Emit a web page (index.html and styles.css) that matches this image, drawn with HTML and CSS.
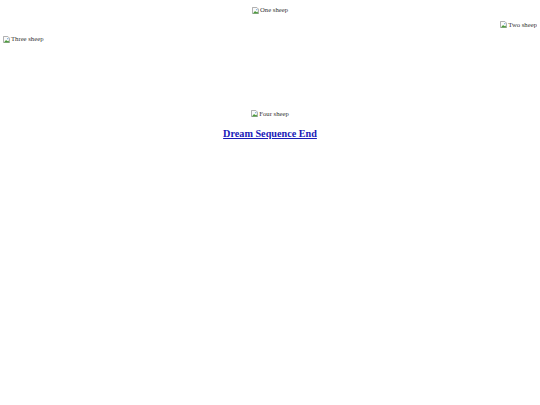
FILE: index.html
```html
<!DOCTYPE html>
<html lang="en">
<head>
    <meta charset="UTF-8">
    <title>Counting Sheep</title>
    <link rel="stylesheet" href="styles.css">
</head>
<body>
    <!-- Ovelhas: cada uma em sua linha -->
    <div class="flock">
        <div class="sheep sheep-center">
            <span class="pic"><svg viewBox="0 0 8 8" width="7" height="7"><path d="M0.5 0.5h5l2 2v5h-7z" fill="#fafafa" stroke="#a0a0a0"/><path d="M1 7.5l2.5-3 1.5 1.5 1-1 1.5 2.5z" fill="#4a9a3a"/><circle cx="5.5" cy="3" r="0.8" fill="#6aa2d8"/></svg></span>One sheep
        </div>
        <div class="sheep sheep-right">
            <span class="pic"><svg viewBox="0 0 8 8" width="7" height="7"><path d="M0.5 0.5h5l2 2v5h-7z" fill="#fafafa" stroke="#a0a0a0"/><path d="M1 7.5l2.5-3 1.5 1.5 1-1 1.5 2.5z" fill="#4a9a3a"/><circle cx="5.5" cy="3" r="0.8" fill="#6aa2d8"/></svg></span>Two sheep
        </div>
        <div class="sheep sheep-left">
            <span class="pic"><svg viewBox="0 0 8 8" width="7" height="7"><path d="M0.5 0.5h5l2 2v5h-7z" fill="#fafafa" stroke="#a0a0a0"/><path d="M1 7.5l2.5-3 1.5 1.5 1-1 1.5 2.5z" fill="#4a9a3a"/><circle cx="5.5" cy="3" r="0.8" fill="#6aa2d8"/></svg></span>Three sheep
        </div>
        <div class="sheep sheep-center sheep-last">
            <span class="pic"><svg viewBox="0 0 8 8" width="7" height="7"><path d="M0.5 0.5h5l2 2v5h-7z" fill="#fafafa" stroke="#a0a0a0"/><path d="M1 7.5l2.5-3 1.5 1.5 1-1 1.5 2.5z" fill="#4a9a3a"/><circle cx="5.5" cy="3" r="0.8" fill="#6aa2d8"/></svg></span>Four sheep
        </div>
    </div>

    <h3 class="ending"><a href="#">Dream Sequence End</a></h3>
</body>
</html>
```

FILE: styles.css
```css
/* Estilos Gerais */
body {
    font-family: "Liberation Serif", "Times New Roman", serif;
    background-color: #fff;
    color: #000;
    margin: 5px 3px;
}

.flock {
    display: flex;
    flex-direction: column;
    gap: 4.5px;
}

.sheep {
    display: flex;
    align-items: center;
    font-size: 6.7px;
    line-height: 10px;
    height: 10px;
    color: #333;
}

.sheep-center {
    justify-content: center;
}

.sheep-right {
    justify-content: flex-end;
}

.sheep-left {
    justify-content: flex-start;
}

.sheep-last {
    margin-top: 60px;
}

.pic {
    display: inline-flex;
    margin-right: 1px;
}

.ending {
    text-align: center;
    font-size: 10.2px;
    margin: 9px 0;
}

.ending a {
    color: #1a1ab8;
}
```
